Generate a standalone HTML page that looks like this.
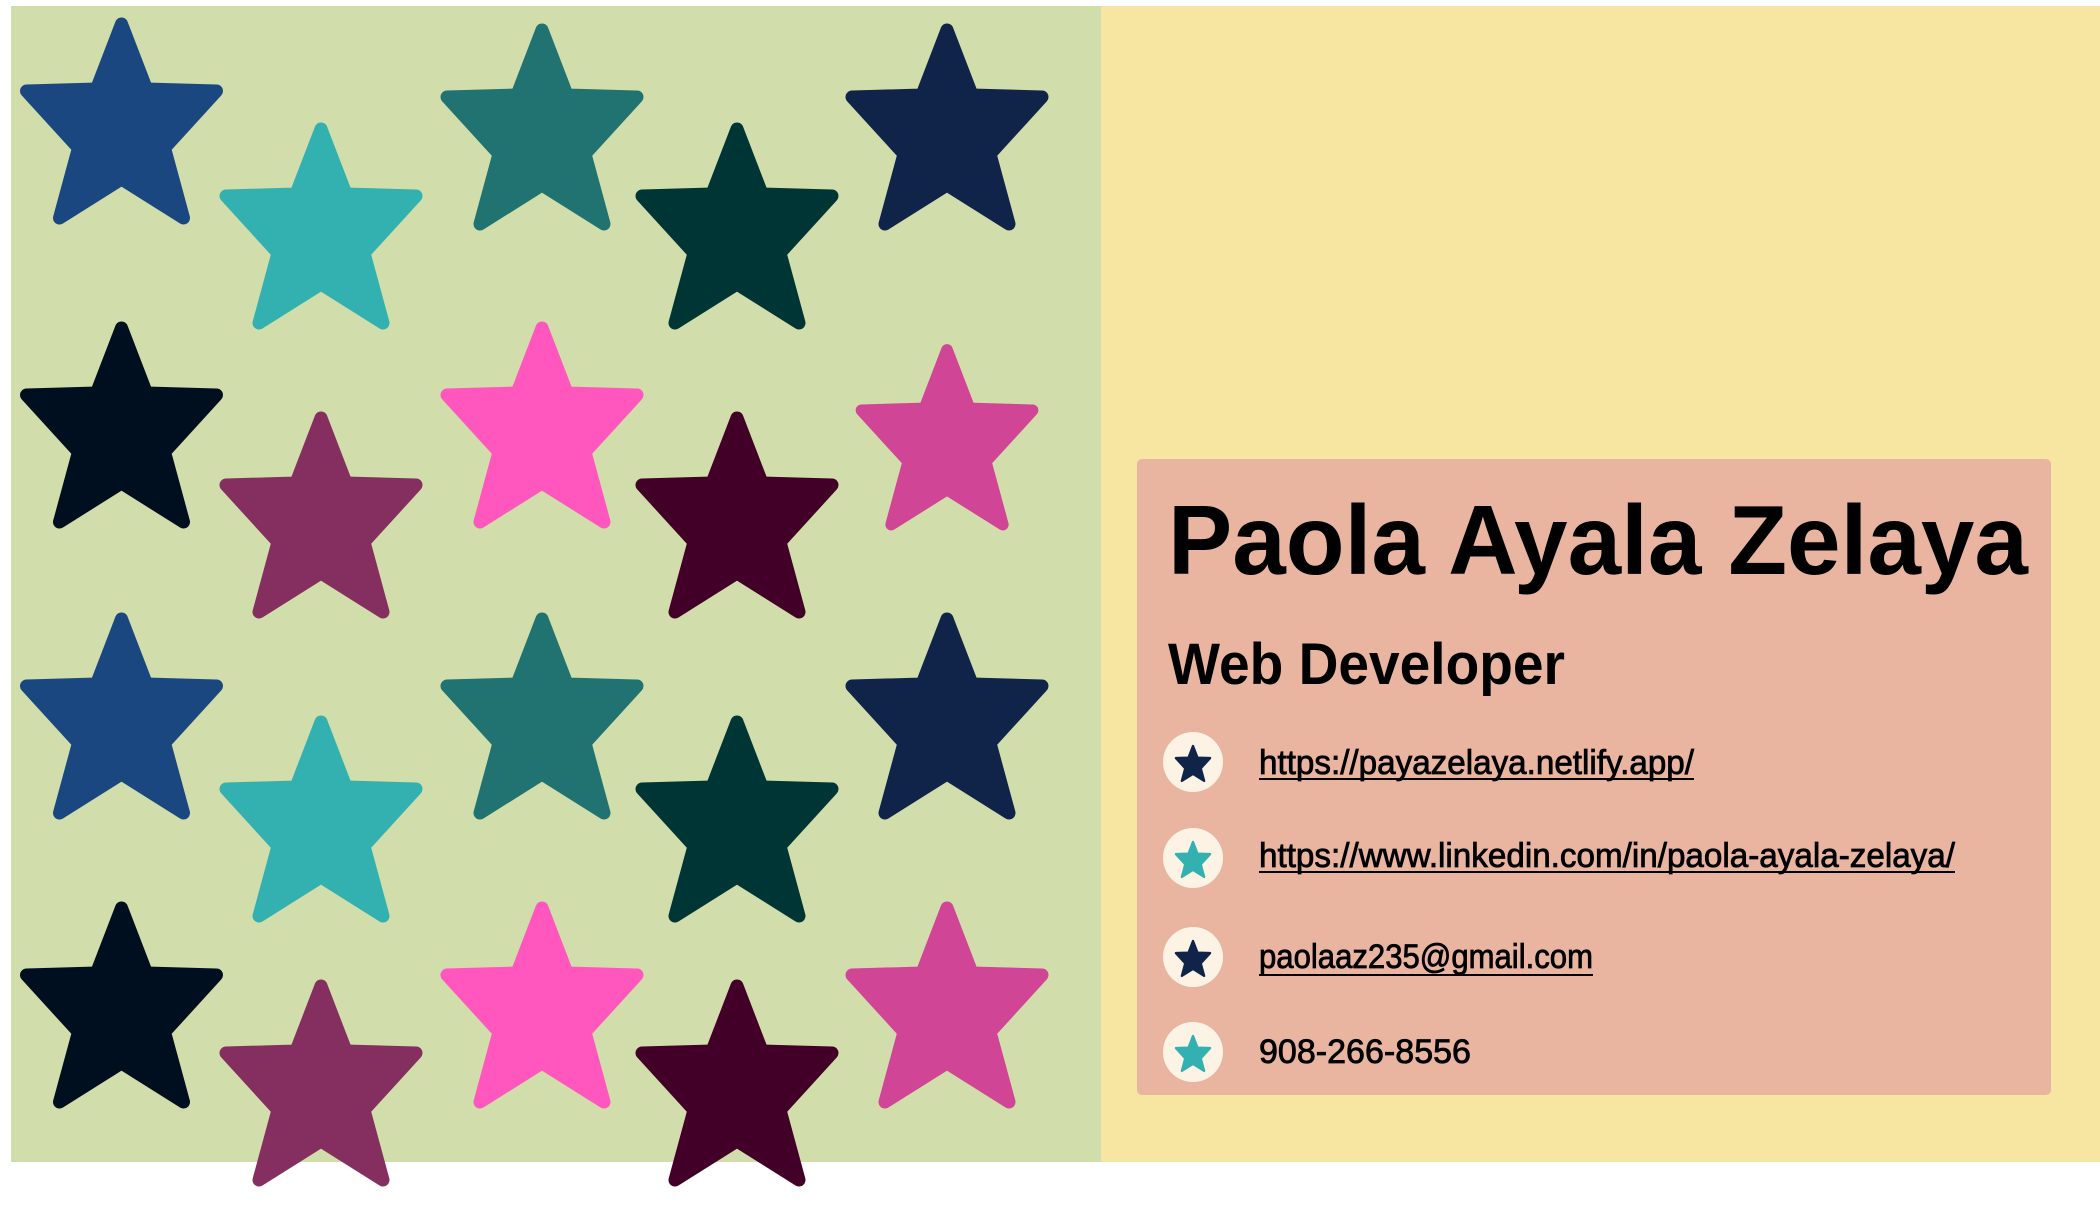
<!DOCTYPE html>
<html><head><meta charset="utf-8"><style>
html,body{margin:0;padding:0;background:#fff;width:2100px;height:1227px;overflow:hidden}
svg{display:block}
text{font-family:"Liberation Sans",sans-serif;fill:#000}
</style></head><body>
<svg width="2100" height="1227" viewBox="0 0 2100 1227" xmlns="http://www.w3.org/2000/svg">
<defs>
<path id="s" d="M0,-100 L25,-35 L95,-33 L43,24 L62,94 L0,55 L-62,94 L-43,24 L-95,-33 L-25,-35Z" stroke-width="13" stroke-linejoin="round"/>
</defs>
<rect x="1101" y="6" width="999" height="1156" fill="#f7e6a2"/>
<rect x="11" y="6" width="1090" height="1156" fill="#d1ddaa"/>
<use href="#s" transform="translate(121.5,124)" fill="#1b4780" stroke="#1b4780"/>
<use href="#s" transform="translate(121.5,428)" fill="#000f1f" stroke="#000f1f"/>
<use href="#s" transform="translate(121.5,719)" fill="#1b4780" stroke="#1b4780"/>
<use href="#s" transform="translate(121.5,1008)" fill="#000f1f" stroke="#000f1f"/>
<use href="#s" transform="translate(321,229)" fill="#33b1b1" stroke="#33b1b1"/>
<use href="#s" transform="translate(321,518)" fill="#842f60" stroke="#842f60"/>
<use href="#s" transform="translate(321,822)" fill="#33b1b1" stroke="#33b1b1"/>
<use href="#s" transform="translate(321,1086)" fill="#842f60" stroke="#842f60"/>
<use href="#s" transform="translate(542,130)" fill="#207370" stroke="#207370"/>
<use href="#s" transform="translate(542,428)" fill="#ff57bd" stroke="#ff57bd"/>
<use href="#s" transform="translate(542,719)" fill="#207370" stroke="#207370"/>
<use href="#s" transform="translate(542,1008)" fill="#ff57bd" stroke="#ff57bd"/>
<use href="#s" transform="translate(737,229)" fill="#003535" stroke="#003535"/>
<use href="#s" transform="translate(737,518)" fill="#420028" stroke="#420028"/>
<use href="#s" transform="translate(737,822)" fill="#003535" stroke="#003535"/>
<use href="#s" transform="translate(737,1086)" fill="#420028" stroke="#420028"/>
<use href="#s" transform="translate(947,130)" fill="#10244a" stroke="#10244a"/>
<use href="#s" transform="translate(947,440) scale(0.9)" fill="#d04596" stroke="#d04596"/>
<use href="#s" transform="translate(947,719)" fill="#10244a" stroke="#10244a"/>
<use href="#s" transform="translate(947,1008)" fill="#d04596" stroke="#d04596"/>

<rect x="1137" y="459" width="914" height="636" rx="5" fill="#e9b5a0"/>
<text x="1168" y="574" font-size="98" font-weight="bold" textLength="860" lengthAdjust="spacingAndGlyphs">Paola Ayala Zelaya</text>
<text x="1168" y="684" font-size="58" font-weight="bold" textLength="397" lengthAdjust="spacingAndGlyphs">Web Developer</text>

<circle cx="1193" cy="762" r="30" fill="#fdf3e4"/>
<use href="#s" transform="translate(1193,764) scale(0.18)" fill="#10244a" stroke="#10244a"/>
<circle cx="1193" cy="858" r="30" fill="#fdf3e4"/>
<use href="#s" transform="translate(1193,860) scale(0.18)" fill="#33b1b1" stroke="#33b1b1"/>
<circle cx="1193" cy="957" r="30" fill="#fdf3e4"/>
<use href="#s" transform="translate(1193,959) scale(0.18)" fill="#10244a" stroke="#10244a"/>
<circle cx="1193" cy="1052" r="30" fill="#fdf3e4"/>
<use href="#s" transform="translate(1193,1054) scale(0.18)" fill="#33b1b1" stroke="#33b1b1"/>

<g font-size="34" stroke="#000" stroke-width="0.8">
<text x="1259" y="774" textLength="435" lengthAdjust="spacingAndGlyphs">https://payazelaya.netlify.app/</text>
<text x="1259" y="867" textLength="696" lengthAdjust="spacingAndGlyphs">https://www.linkedin.com/in/paola-ayala-zelaya/</text>
<text x="1259" y="968" textLength="334" lengthAdjust="spacingAndGlyphs">paolaaz235@gmail.com</text>
<text x="1259" y="1063" textLength="212" lengthAdjust="spacingAndGlyphs">908-266-8556</text>
</g>
<rect x="1259" y="778" width="435" height="2" fill="#000"/>
<rect x="1259" y="871" width="696" height="2" fill="#000"/>
<rect x="1259" y="974" width="334" height="2" fill="#000"/>
</svg>
</body></html>
